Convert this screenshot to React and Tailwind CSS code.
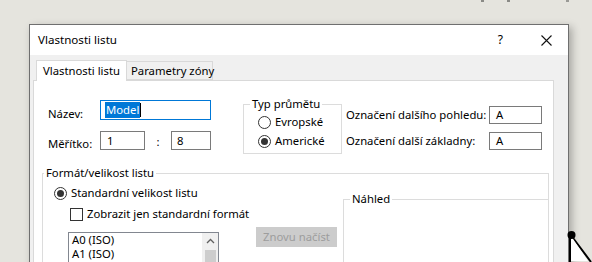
import React from 'react';

const font = { fontFamily: '"Noto Sans", "Liberation Sans", sans-serif' };

function Radio({ checked }) {
  return (
    <span className="w-[13px] h-[13px] rounded-full border border-[#333333] bg-white flex items-center justify-center shrink-0">
      {checked && <span className="w-[7px] h-[7px] rounded-full bg-[#333333]"></span>}
    </span>
  );
}

function GroupBox({ title, className, legendClass, children }) {
  return (
    <div className={`border border-[#dcdcdc] ${className}`}>
      <div className={`-mt-[8px] w-fit bg-white px-[2px] h-[14px] leading-[14px] whitespace-nowrap ${legendClass}`}>{title}</div>
      {children}
    </div>
  );
}

export default function App() {
  return (
    <div
      className="relative w-[592px] h-[262px] overflow-hidden bg-[#e5e4de] pt-[24px] pl-[29px] text-[11.3px] text-black"
      style={font}
    >
      <div className="absolute top-0 left-[481px] w-[3px] h-[2px] bg-[#8a8a86]"></div>
      <div className="absolute top-0 left-[507px] w-[3px] h-[2px] bg-[#8a8a86]"></div>
      <div className="absolute top-0 left-[566px] w-[3px] h-[2px] bg-[#9a9a96]"></div>

      <div className="w-[540px] h-[260px] border border-[#6f6f6f] bg-[#f0f0f0] shadow-[3px_3px_8px_rgba(0,0,0,0.28)] flex flex-col">
        {/* title bar */}
        <div className="h-[30px] bg-white flex items-center pl-[8px] shrink-0">
          <span className="text-[11.6px]">Vlastnosti listu</span>
          <span className="ml-auto mr-[38px] text-[12px]">?</span>
          <svg width="11" height="11" viewBox="0 0 11 11" className="mr-[16px]">
            <path d="M0.5 0.5 L10.5 10.5 M10.5 0.5 L0.5 10.5" stroke="#111" strokeWidth="1.1" fill="none" />
          </svg>
        </div>

        {/* tabs */}
        <div className="flex items-end pl-[6px] mt-[5px] h-[20px] shrink-0 whitespace-nowrap">
          <div className="relative z-10 h-[21px] w-[91px] bg-white border border-b-0 border-[#d9d9d9] pl-[6px] pt-[2px] -mb-[1px]">
            Vlastnosti listu
          </div>
          <div className="h-[19px] w-[86px] bg-[#f0f0f0] border border-l-0 border-[#d9d9d9] pl-[4px] pt-[1px]">
            Parametry zóny
          </div>
        </div>

        {/* panel */}
        <div className="ml-[3px] w-[521px] flex-1 bg-white border border-[#d9d9d9] border-b-0 flex flex-col">
          <div className="h-[92px] flex items-start shrink-0">
            {/* name & scale */}
            <div className="ml-[14px] mt-[19px] w-[163px] flex flex-col gap-[11px]">
              <div className="flex items-start h-[20px]">
                <span className="w-[52px] pt-[6px]">Název:</span>
                <div className="w-[111px] h-[20px] border border-[#0078d7] flex items-center pl-[4px]">
                  <span className="bg-[#0078d7] text-white px-[1px] leading-[16px]">Model</span>
                  <span className="w-[1px] h-[14px] bg-black"></span>
                </div>
              </div>
              <div className="flex items-start h-[19px]">
                <span className="w-[52px] pt-[5px]">Měřítko:</span>
                <div className="w-[45px] h-[19px] border border-[#7a7a7a] pl-[6px] leading-[17px]">1</div>
                <span className="w-[26px] text-center leading-[19px] pt-[1px]">:</span>
                <div className="w-[40px] h-[19px] border border-[#7a7a7a] pl-[5px] leading-[17px]">8</div>
              </div>
            </div>

            {/* projection */}
            <GroupBox title="Typ průmětu" legendClass="ml-[6px]" className="ml-[32px] mt-[23px] w-[99px] h-[50px]">
              <div className="flex flex-col mt-[2px] pl-[14px]">
                <div className="flex items-center gap-[4px] h-[19px]">
                  <Radio />
                  <span>Evropské</span>
                </div>
                <div className="flex items-center gap-[4px] h-[19px]">
                  <Radio checked />
                  <span>Americké</span>
                </div>
              </div>
            </GroupBox>

            {/* labels */}
            <div className="ml-[4px] mt-[25px] flex flex-col gap-[8px]">
              <div className="flex items-center h-[18px]">
                <span className="w-[143px]">Označení dalšího pohledu:</span>
                <div className="w-[53px] h-[18px] border border-[#7a7a7a] pl-[6px] leading-[16px]">A</div>
              </div>
              <div className="flex items-center h-[18px]">
                <span className="w-[143px]">Označení další základny:</span>
                <div className="w-[53px] h-[18px] border border-[#7a7a7a] pl-[6px] leading-[16px]">A</div>
              </div>
            </div>
          </div>

          {/* format */}
          <GroupBox title="Formát/velikost listu" legendClass="ml-[1px]" className="ml-[8px] w-[507px] flex-1 border-b-0 flex flex-col">
            <div className="flex flex-1">
              <div className="w-[300px] flex flex-col">
                <div className="mt-[5px] ml-[11px] h-[16px] flex items-center gap-[4px]">
                  <Radio checked />
                  <span>Standardní velikost listu</span>
                </div>
                <div className="mt-[5px] ml-[27px] h-[16px] flex items-center gap-[4px]">
                  <span className="w-[13px] h-[13px] border border-[#333333] bg-white"></span>
                  <span>Zobrazit jen standardní formát</span>
                </div>
                <div className="mt-[5px] ml-[25px] flex items-start">
                  <div className="mt-[5px] w-[151px] h-[40px] border border-[#828790] flex">
                    <div className="flex-1 pl-[3px] leading-[14px]">
                      <div>A0 (ISO)</div>
                      <div>A1 (ISO)</div>
                    </div>
                    <div className="w-[16px] bg-[#f0f0f0] flex flex-col items-center">
                      <svg width="9" height="6" viewBox="0 0 9 6" className="mt-[5px]">
                        <path d="M1 5 L4.5 1.5 L8 5" stroke="#606060" strokeWidth="1.3" fill="none" />
                      </svg>
                      <div className="mt-[6px] w-[11px] flex-1 bg-[#cdcdcd]"></div>
                    </div>
                  </div>
                  <div className="ml-[37px] w-[81px] h-[20px] bg-[#cccccc] text-[#9d9d9d] flex items-center justify-center whitespace-nowrap">
                    Znovu načíst
                  </div>
                </div>
              </div>
              <GroupBox title="Náhled" legendClass="ml-[6px]" className="mt-[19px] flex-1 border-r-0 border-b-0" />
            </div>
          </GroupBox>
        </div>
      </div>

      {/* mouse cursor */}
      <svg className="absolute left-[567px] top-[230px]" width="25" height="32" viewBox="0 0 25 32">
        <path d="M3 4 L3 32 M3 4 L24 32" stroke="#000" strokeWidth="2" fill="none" />
        <path d="M4 6 L4 31 L21 31 Z" fill="#ffffff" />
        <circle cx="4.5" cy="5" r="4" fill="#000" />
      </svg>
    </div>
  );
}
